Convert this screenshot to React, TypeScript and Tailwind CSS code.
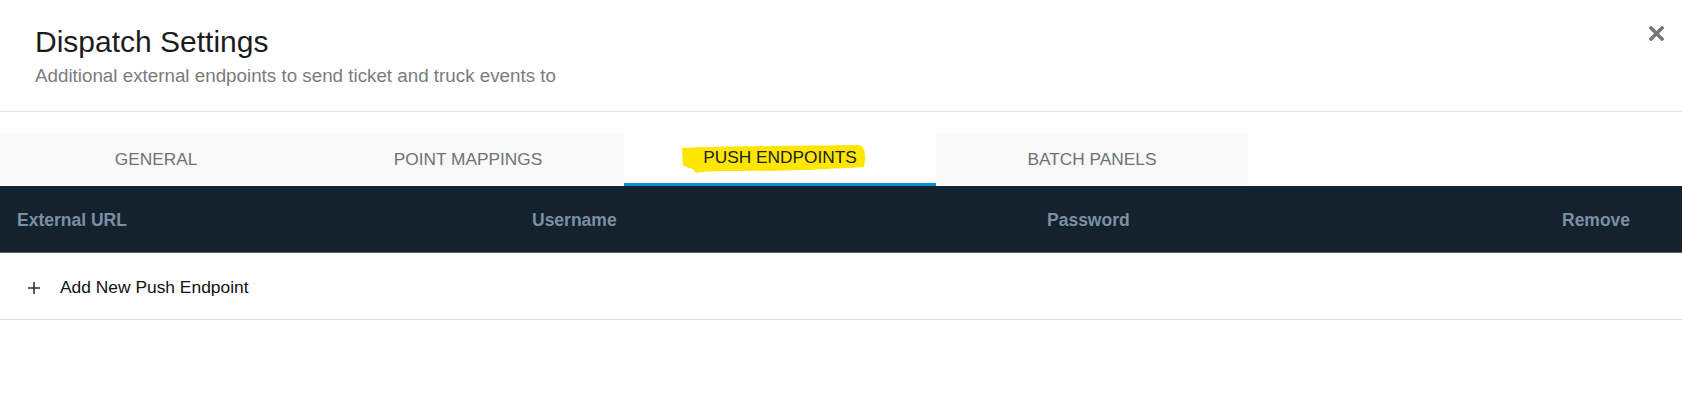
import React from "react"

const tabs = ["GENERAL", "POINT MAPPINGS", "PUSH ENDPOINTS", "BATCH PANELS"]
const columns = ["External URL", "Username", "Password", "Remove"]

// маркер-выделение поверх активной вкладки
function Highlight() {
  return (
    <svg
      className="absolute left-[-22px] top-[0px]"
      width="186"
      height="30"
      viewBox="0 0 186 30"
    >
      <path
        d="M1 3 C40 1 120 1 178 0 C185 1 185 14 183 22 C150 24 110 26 60 26 C40 26 25 26 15 28 L12 24 C8 23 5 22 4 21 L2 21 Z"
        fill="#ffe600"
      />
    </svg>
  )
}

function Tab({ label, active }: { label: string; active: boolean }) {
  return (
    <div
      className={
        active
          ? "w-[312px] h-[53px] flex items-center justify-center bg-white border-b-[3px] border-[#0b8fd9]"
          : "w-[312px] h-[53px] flex items-center justify-center bg-[#f9f9f9]"
      }
    >
      {active ? (
        <span className="relative text-[17.3px] text-[#1d2127]">
          <Highlight />
          <span className="relative">{label}</span>
        </span>
      ) : (
        <span className="text-[17.3px] text-[#6c7278]">{label}</span>
      )}
    </div>
  )
}

export default function App() {
  return (
    <div className="w-[1682px] h-[415px] bg-white font-['Liberation_Sans',Arial,sans-serif]">
      <div className="flex justify-between border-b border-[#e1e4e8] h-[112px]">
        <div className="pl-[35px] pt-[24px]">
          <h1 className="text-[30px] leading-[36px] text-[#1c1c1c]">Dispatch Settings</h1>
          <p className="mt-[4px] text-[18.8px] leading-[24px] text-[#7b7b7b]">
            Additional external endpoints to send ticket and truck events to
          </p>
        </div>
        <div className="pr-[18px] pt-[26px]">
          <svg width="15" height="15" viewBox="0 0 15 15">
            <path d="M2 2 L13 13 M13 2 L2 13" stroke="#777" strokeWidth="3.6" strokeLinecap="square" />
          </svg>
        </div>
      </div>

      <div className="flex mt-[21px]">
        {tabs.map((t) => (
          <Tab key={t} label={t} active={t === "PUSH ENDPOINTS"} />
        ))}
      </div>

      <div className="grid grid-cols-[515px_515px_515px_1fr] h-[67px] pt-[3px] bg-[#13222d] border-b border-[#56636e]">
        {columns.map((c) => (
          <div key={c} className="flex items-center pl-[17px] text-[17.5px] font-bold text-[#7c8fa4]">
            {c}
          </div>
        ))}
      </div>

      <div className="flex items-center h-[67px] pt-[3px] border-b border-[#dedede]">
        <svg className="ml-[28px]" width="12" height="12" viewBox="0 0 12 12">
          <path d="M6 0 V12 M0 6 H12" stroke="#26323c" strokeWidth="1.6" />
        </svg>
        <span className="ml-[20px] text-[17.4px] text-[#111]">Add New Push Endpoint</span>
      </div>
    </div>
  )
}
